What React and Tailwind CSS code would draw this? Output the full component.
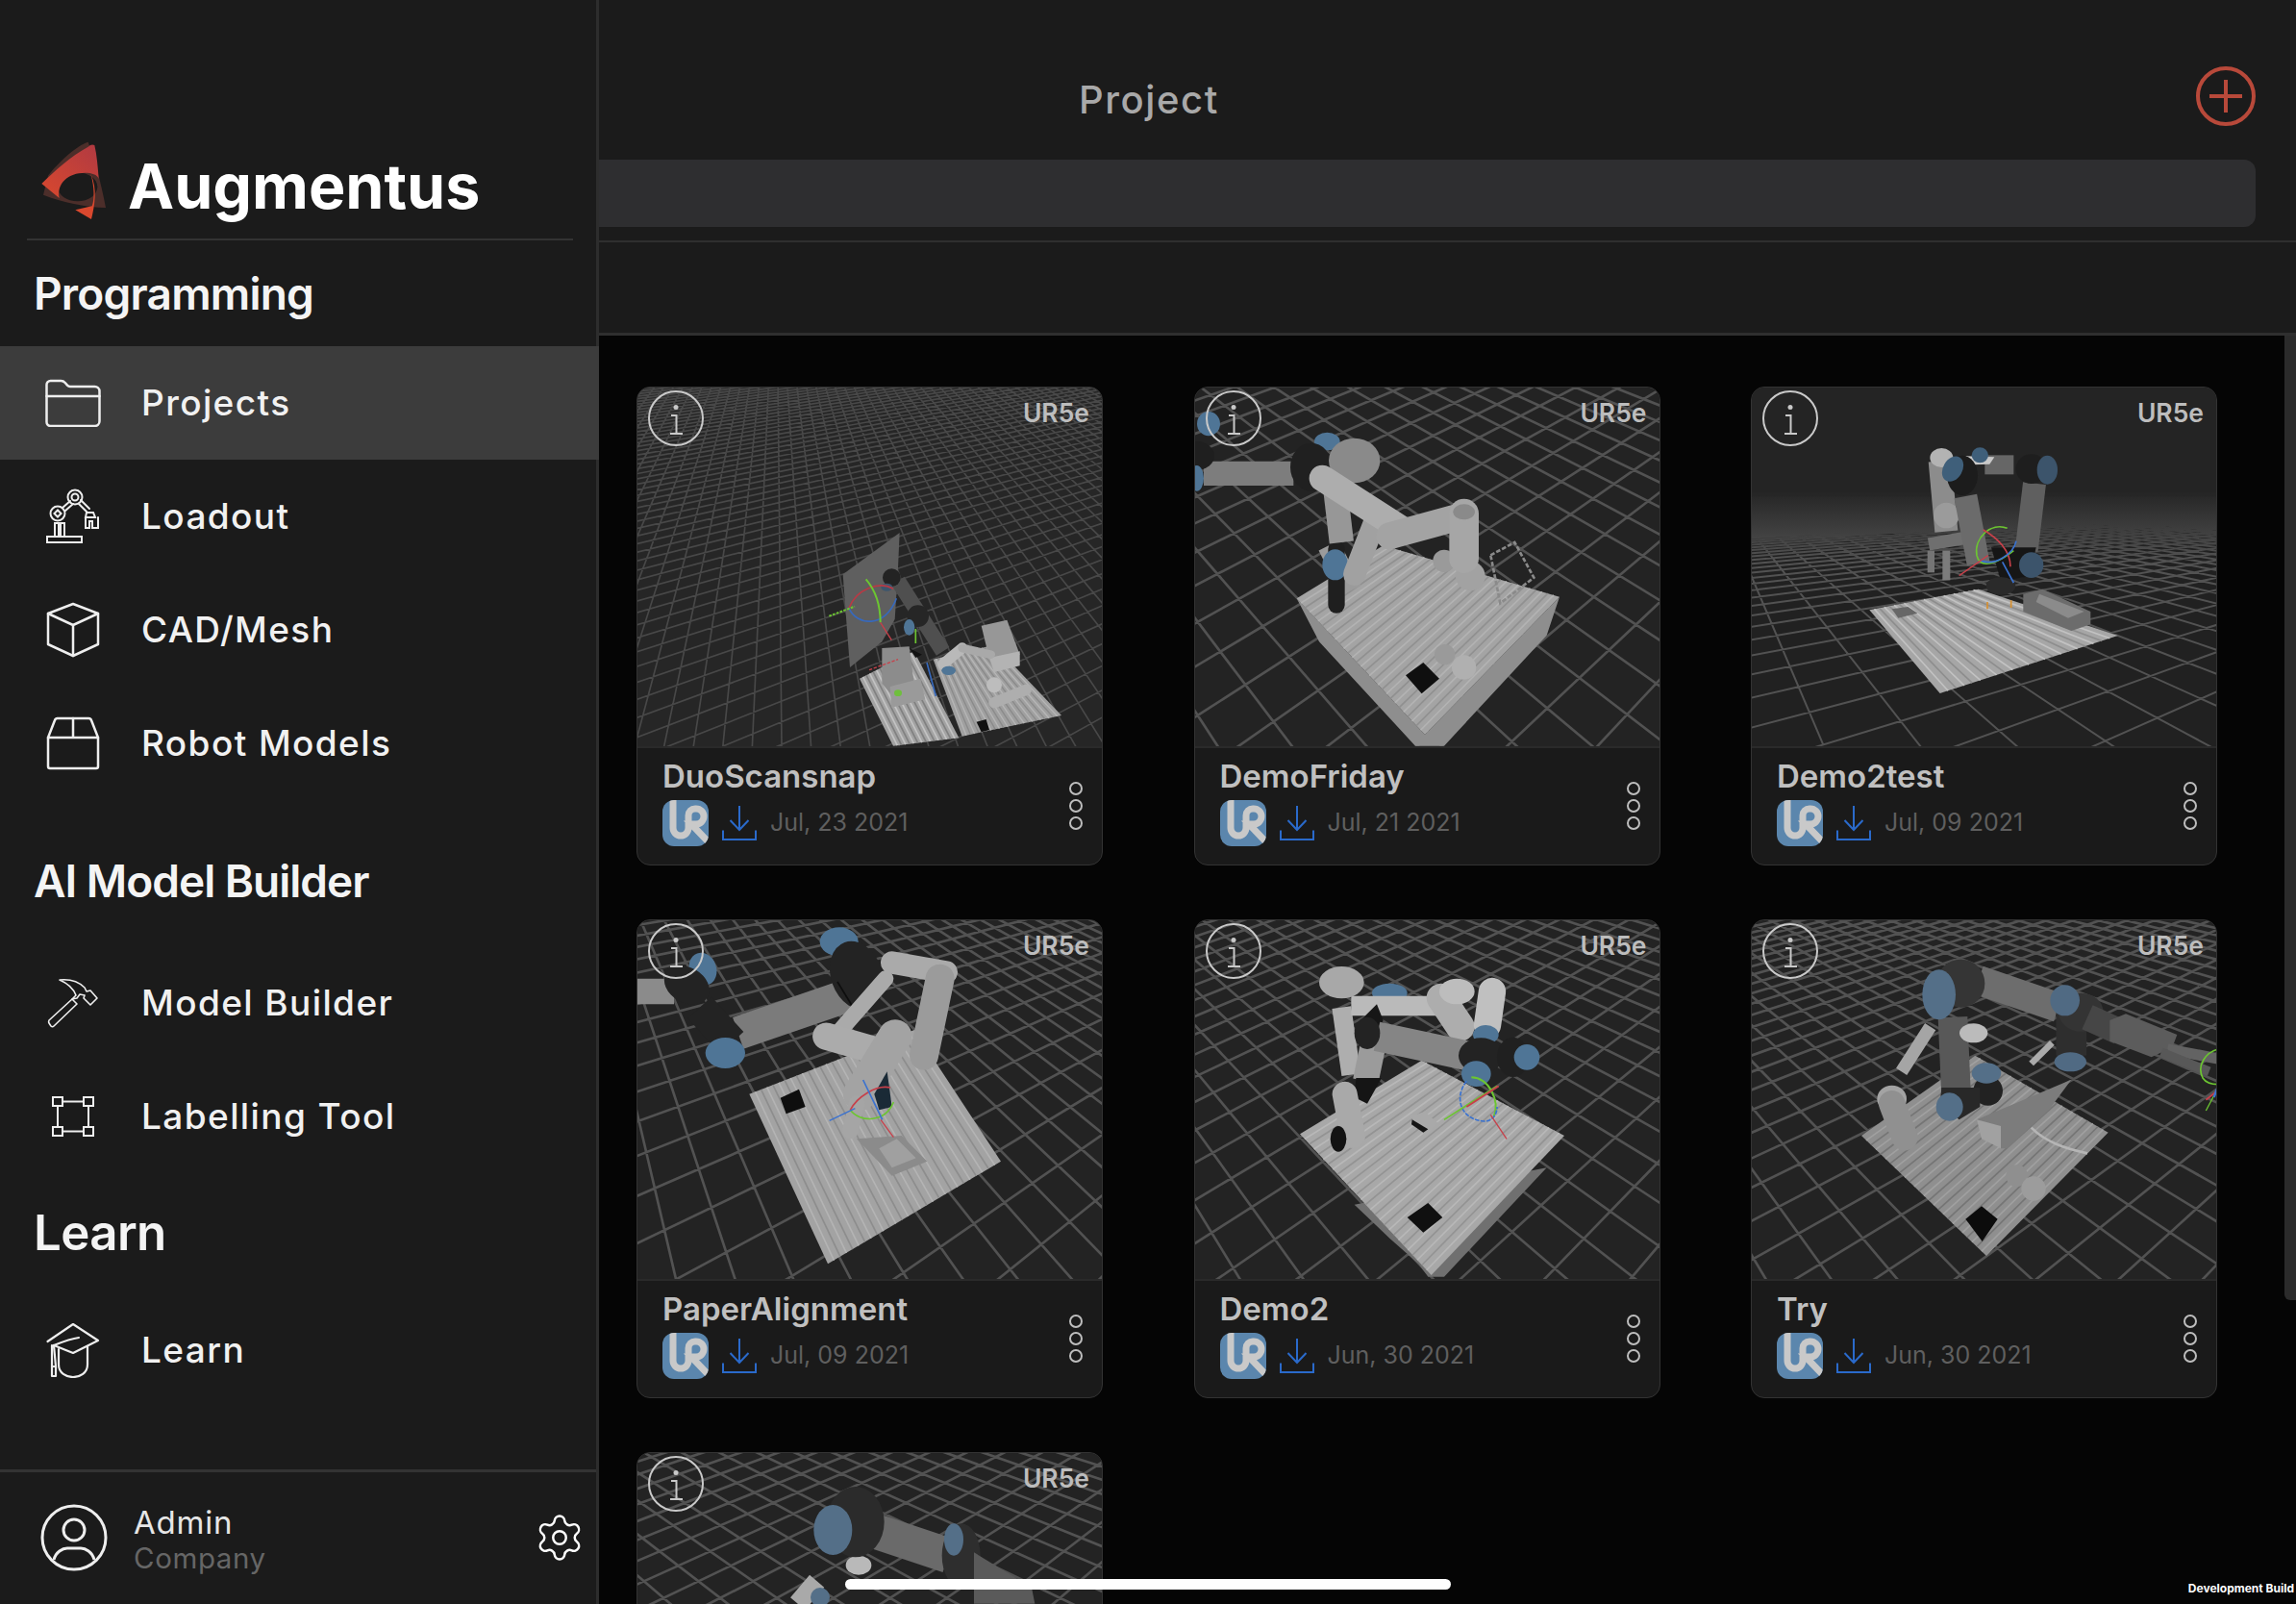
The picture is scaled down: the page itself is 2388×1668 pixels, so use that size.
import React from "react";
import { Settings } from "lucide-react";

const FONT = "font-['Inter','Noto_Sans',sans-serif]";

// perspective floor grid, built from two vanishing points
const Grid = ({ vp1, vp2, o, s1, s2, w = 8, c = "#525252" }) => {
  const d1 = Math.hypot(vp1[0] - o[0], vp1[1] - o[1]);
  const d2 = Math.hypot(vp2[0] - o[0], vp2[1] - o[1]);
  const a = s1 / (d1 - s1);
  const b = s2 / (d2 - s2);
  const pt = (u, v) => {
    const den = a * u + b * v + 1;
    const x = (a * u * vp1[0] + b * v * vp2[0] + o[0]) / den;
    const y = (a * u * vp1[1] + b * v * vp2[1] + o[1]) / den;
    return `${x.toFixed(1)} ${y.toFixed(1)}`;
  };
  let d = "";
  for (let i = -70; i <= 260; i++) {
    const u0 = (0.06 - 1 - b * i) / a;
    d += `M${pt(u0, i)}L${pt(400, i)}`;
    const v0 = (0.06 - 1 - a * i) / b;
    d += `M${pt(i, v0)}L${pt(i, 400)}`;
  }
  return <path d={d} fill="none" stroke={c} strokeWidth={w} />;
};

const Tube = ({ p, w, c, cap = "butt" }) => (
  <line x1={p[0]} y1={p[1]} x2={p[2]} y2={p[3]} stroke={c} strokeWidth={w} strokeLinecap={cap} />
);

const Cap = ({ x, y, rx, ry = rx, c, r = 0 }) => (
  <ellipse cx={x} cy={y} rx={rx} ry={ry} fill={c} transform={`rotate(${r} ${x} ${y})`} />
);

const Poly = ({ pts, c }) => <polygon points={pts} fill={c} />;

// scanned table: a quad with ripples running from edge a-d to edge b-c
const Table = ({ q, n, base, hi, lo, w = 7 }) => {
  const [a, b, c, d] = q;
  const lerp = (p, r, t) => [p[0] + (r[0] - p[0]) * t, p[1] + (r[1] - p[1]) * t];
  const lines = [];
  for (let i = 1; i < n; i++) {
    const t = i / n;
    const p = lerp(a, d, t);
    const r = lerp(b, c, t);
    lines.push(<line key={i} x1={p[0]} y1={p[1]} x2={r[0]} y2={r[1]} stroke={i % 2 ? hi : lo} strokeWidth={w} />);
  }
  return (
    <g>
      <polygon points={q.map((p) => p.join(",")).join(" ")} fill={base} />
      {lines}
    </g>
  );
};

const Scene = ({ ox, oy, children, bg = "#232323" }) => (
  <svg width="485" height="373" viewBox={`${ox} ${oy} 1455 1119`} className="block blur-[0.6px]">
    <rect x={ox} y={oy} width="1455" height="1119" fill={bg} />
    {children}
  </svg>
);

const BLUE = "#4f7596";
const DARK = "#232323";

const SceneOne = () => (
  <Scene ox={37} oy={37} bg="#262626">
    <Grid vp1={[4300, -500]} vp2={[470, -500]} o={[400, 1050]} s1={92} s2={62} w={5} c="#484848" />
    <Poly pts="855,490 850,600 840,760 800,830 700,910 690,780 678,620" c="#5f5f5f" />
    <Tube p={[850, 640, 990, 860]} w={48} c="#4f4f4f" />
    <Cap x={830} y={630} rx={28} c={DARK} />
    <Cap x={912} y={750} rx={34} c="#262626" />
    <Cap x={885} y={785} rx={17} ry={25} c={BLUE} />
    <Cap x={815} y={660} rx={18} ry={12} c="#3d566d" />
    <Table q={[[730, 945], [835, 1155], [1040, 1130], [900, 860]]} n={16} base="#a3a3a3" hi="#c3c3c3" lo="#808080" w={5} />
    <Table q={[[960, 885], [1050, 1125], [1360, 1060], [1150, 840]]} n={24} base="#a0a0a0" hi="#b6b6b6" lo="#8a8a8a" w={4} />
    <Poly pts="800,850 885,845 900,960 825,990 800,960" c="#8c8c8c" />
    <Poly pts="825,970 920,945 935,1010 830,1035" c="#9a9a9a" />
    <Poly pts="1110,780 1190,762 1230,870 1140,905" c="#979797" />
    <Poly pts="1135,880 1230,860 1230,905 1150,925" c="#b3b3b3" />
    <Tube p={[990, 900, 1050, 850]} w={34} c="#b9b9b9" cap="round" />
    <Tube p={[1050, 850, 1140, 870]} w={26} c="#a9a9a9" cap="round" />
    <Cap x={1150} y={965} rx={24} c="#bdbdbd" />
    <Tube p={[1150, 1020, 1250, 980]} w={34} c="#aeaeae" cap="round" />
    <Cap x={1008} y={920} rx={22} ry={14} c="#4f7596" />
    <Poly pts="1095,1080 1125,1072 1135,1105 1110,1112" c="#111" />
    <Poly pts="885,850 925,870 905,880" c="#111" />
    <Cap x={850} y={990} rx={12} ry={10} c="#6fbf3d" />
    <path d="M697 725 C720 665 790 640 835 665" fill="none" stroke="#b73a45" strokeWidth={5} />
    <path d="M697 725 C720 780 810 790 845 695" fill="none" stroke="#3769bc" strokeWidth={5} />
    <path d="M750 635 C780 670 795 720 795 770" fill="none" stroke="#6cc531" strokeWidth={6} />
    <path d="M635 750 L715 720" fill="none" stroke="#6cc531" strokeWidth={6} strokeDasharray="8 4" />
    <path d="M795 770 L830 825" fill="none" stroke="#c7404a" strokeWidth={4} />
    <path d="M760 918 L850 885" fill="none" stroke="#c7404a" strokeWidth={4} strokeDasharray="10 5" />
    <path d="M905 790 L905 835" fill="none" stroke="#6cc531" strokeWidth={5} />
    <path d="M940 895 L968 1000" fill="none" stroke="#3769bc" strokeWidth={5} />
  </Scene>
);

const SceneTwo = () => (
  <Scene ox={33} oy={37}>
    <Grid vp1={[3400, -1100]} vp2={[-1300, -1000]} o={[650, 1000]} s1={150} s2={150} />
    <Poly pts="350,695 420,830 720,1155 810,1155 1130,810 1170,690 750,1120" c="#8e8e8e" />
    <Table q={[[350, 695], [620, 530], [1170, 690], [750, 1120]]} n={30} base="#a4a4a4" hi="#b3b3b3" lo="#909090" w={5} />
    <Poly pts="690,935 745,895 795,945 740,992" c="#0f0f0f" />
    <Cap x={812} y={870} rx={32} c="#9a9a9a" />
    <Cap x={872} y={910} rx={38} c="#b0b0b0" />
    <path d="M955 560 L1030 520 L1090 630 L985 710 Z" fill="none" stroke="#8a8a8a" strokeWidth={8} strokeDasharray="14 6" />
    <Cap x={810} y={578} rx={35} c="#9a9a9a" />
    <Cap x={892} y={625} rx={46} c="#a2a2a2" />
    <Tube p={[450, 530, 520, 670]} w={70} c="#9b9b9b" />
    <Tube p={[474, 540, 474, 715]} w={52} c="#1f1f1f" cap="round" />
    <Cap x={470} y={590} rx={40} ry={48} c={BLUE} />
    <Tube p={[600, 440, 530, 620]} w={70} c="#a1a1a1" cap="round" />
    <Tube p={[470, 350, 490, 520]} w={76} c="#979797" />
    <Tube p={[60, 305, 340, 305]} w={76} c="#7d7d7d" />
    <Cap x={75} y={150} rx={36} ry={38} c={BLUE} />
    <Cap x={38} y={250} rx={55} ry={45} c="#1f1f1f" />
    <Cap x={38} y={320} rx={22} ry={40} c={BLUE} />
    <Cap x={445} y={205} rx={40} ry={28} c={BLUE} />
    <Cap x={395} y={285} rx={65} ry={75} c="#202020" />
    <Cap x={530} y={265} rx={80} ry={70} c="#8a8a8a" />
    <Tube p={[430, 320, 680, 480]} w={82} c="#adadad" cap="round" />
    <Tube p={[640, 500, 860, 440]} w={84} c="#a3a3a3" cap="round" />
    <Tube p={[872, 430, 872, 570]} w={92} c="#a6a6a6" cap="round" />
    <Cap x={872} y={425} rx={34} ry={24} c="#8a8a8a" />
  </Scene>
);

const SceneThree = () => (
  <Scene ox={33} oy={21} bg="#212121">
    <defs>
      <linearGradient id="horizonFade" x1="0" y1="0" x2="0" y2="1">
        <stop offset="0" stopColor="#262626" />
        <stop offset="1" stopColor="#262626" stopOpacity="0" />
      </linearGradient>
    </defs>
    <Grid vp1={[3000, 300]} vp2={[-100, 300]} o={[700, 1000]} s1={180} s2={110} w={6} />
    <rect x="33" y="21" width="1455" height="340" fill="#242424" />
    <rect x="33" y="350" width="1455" height="210" fill="url(#horizonFade)" />
    <Table q={[[400, 715], [620, 975], [1175, 795], [740, 650]]} n={22} base="#a6a6a6" hi="#c2c2c2" lo="#8d8d8d" w={5} />
    <Poly pts="470,712 520,705 550,725 490,740" c="#676767" />
    <Poly pts="880,665 940,650 1090,720 1090,760 1030,780 880,720" c="#6c6c6c" />
    <Poly pts="930,665 1070,720 1020,740 920,690" c="#8b8b8b" />
    <Tube p={[620, 250, 640, 470]} w={72} c="#8c8c8c" />
    <Cap x={625} y={240} rx={36} ry={30} c="#b3b3b3" />
    <Cap x={640} y={420} rx={40} ry={40} c="#9b9b9b" />
    <Tube p={[585, 510, 700, 490]} w={40} c="#6f6f6f" />
    <Tube p={[592, 530, 592, 598]} w={22} c="#757575" />
    <Tube p={[640, 530, 640, 622]} w={24} c="#7c7c7c" />
    <Tube p={[700, 360, 740, 570]} w={72} c="#6b6b6b" />
    <Tube p={[760, 262, 850, 262]} w={60} c="#666" />
    <Poly pts="700,235 790,238 775,260 720,262" c="#c9c9c9" />
    <Cap x={690} y={295} rx={48} ry={62} c="#1c1c1c" />
    <Cap x={660} y={275} rx={30} ry={42} c="#3f5f7a" r={30} />
    <Cap x={745} y={232} rx={26} ry={24} c="#3f5f7a" />
    <Tube p={[915, 320, 890, 530]} w={72} c="#5f5f5f" />
    <Cap x={905} y={275} rx={48} ry={46} c="#1e1e1e" />
    <Cap x={955} y={278} rx={32} ry={45} c="#3c546b" />
    <Poly pts="780,520 920,520 900,610 810,625" c="#161616" />
    <Cap x={905} y={575} rx={38} ry={40} c="#3c546b" />
    <Cap x={810} y={640} rx={46} ry={28} c="#2a2a2a" />
    <path d="M830 460 C780 440 725 490 735 545 C745 590 800 570 850 530" fill="none" stroke="#6cc531" strokeWidth={5} />
    <path d="M755 465 C800 490 840 530 840 580" fill="none" stroke="#c7404a" strokeWidth={5} />
    <path d="M745 560 C790 580 850 540 858 500" fill="none" stroke="#3a72d0" strokeWidth={5} />
    <path d="M680 608 L770 545" fill="none" stroke="#c7404a" strokeWidth={4} />
    <path d="M815 565 L850 630" fill="none" stroke="#3a72d0" strokeWidth={5} />
    <path d="M768 690 L768 712 M842 685 L842 708" fill="none" stroke="#d8902f" strokeWidth={5} />
  </Scene>
);

const SceneFour = () => (
  <Scene ox={36} oy={18}>
    <Grid vp1={[3200, -500]} vp2={[-290, -770]} o={[400, 850]} s1={135} s2={120} />
    <Table q={[[385, 560], [630, 1090], [1170, 770], [900, 360]]} n={28} base="#a3a3a3" hi="#b4b4b4" lo="#8d8d8d" w={5} />
    <Poly pts="482,572 540,545 560,600 500,622" c="#0e0e0e" />
    <Poly pts="720,700 860,690 940,770 830,815" c="#8b8b8b" />
    <Poly pts="845,700 905,760 830,790 790,730" c="#a0a0a0" />
    <Tube p={[36, 240, 150, 240]} w={80} c="#8b8b8b" />
    <Tube p={[350, 370, 700, 250]} w={104} c="#7b7b7b" />
    <Cap x={240} y={170} rx={42} ry={52} c={BLUE} r={-20} />
    <Cap x={190} y={220} rx={75} ry={55} c={DARK} r={30} />
    <Tube p={[230, 290, 330, 400]} w={100} c="#232323" />
    <Cap x={310} y={432} rx={62} ry={48} c={BLUE} />
    <Cap x={665} y={85} rx={60} ry={45} c={BLUE} />
    <Cap x={720} y={190} rx={80} ry={110} c={DARK} r={-20} />
    <Tube p={[660, 210, 715, 300]} w={5} c="#0e0e0e" />
    <Tube p={[830, 150, 1000, 180]} w={70} c="#aaa" cap="round" />
    <Tube p={[980, 200, 930, 440]} w={90} c="#9b9b9b" cap="round" />
    <Tube p={[810, 200, 670, 360]} w={50} c="#aaa" cap="round" />
    <Tube p={[625, 380, 800, 430]} w={85} c="#ababab" cap="round" />
    <Tube p={[840, 380, 730, 560]} w={105} c="#a3a3a3" cap="round" />
    <Tube p={[720, 590, 700, 675]} w={50} c="#a5a5a5" cap="round" />
    <Poly pts="775,560 815,490 830,600 790,610" c="#1a2a36" />
    <path d="M700 610 C720 570 780 530 825 540" fill="none" stroke="#c7404a" strokeWidth={5} />
    <path d="M700 610 C730 650 810 650 835 585" fill="none" stroke="#6cc531" strokeWidth={5} />
    <path d="M740 516 L800 640" fill="none" stroke="#3a72d0" strokeWidth={5} />
    <path d="M635 643 L715 605" fill="none" stroke="#3a72d0" strokeWidth={4} />
    <path d="M795 640 L835 695" fill="none" stroke="#c7404a" strokeWidth={4} />
  </Scene>
);

const SceneFive = () => (
  <Scene ox={33} oy={18}>
    <Grid vp1={[3200, -1000]} vp2={[-950, -700]} o={[600, 950]} s1={130} s2={130} />
    <Poly pts="530,905 640,1010 730,1090 760,1130 810,1130 1130,790" c="#707070" />
    <Table q={[[360, 685], [740, 455], [1185, 690], [770, 1125]]} n={28} base="#a8a8a8" hi="#b8b8b8" lo="#939393" w={5} />
    <Poly pts="695,945 760,900 805,945 745,992" c="#101010" />
    <Poly pts="705,630 750,615 790,650 750,690" c="#a9a9a9" />
    <Poly pts="710,640 760,670 745,680 708,655" c="#151515" />
    <Cap x={640} y={245} rx={55} ry={30} c={BLUE} />
    <Tube p={[490, 290, 520, 500]} w={60} c="#aeaeae" />
    <Tube p={[590, 400, 565, 520]} w={80} c="#9b9b9b" />
    <Poly pts="535,510 615,510 570,590 530,570" c="#151515" />
    <Tube p={[500, 560, 525, 690]} w={78} c="#a9a9a9" cap="round" />
    <Cap x={480} y={700} rx={25} ry={40} c="#131313" />
    <Tube p={[520, 285, 810, 285]} w={62} c="#bababa" />
    <Cap x={490} y={212} rx={70} ry={50} c="#a8a8a8" />
    <Tube p={[800, 260, 860, 350]} w={90} c="#adadad" cap="round" />
    <Tube p={[960, 240, 945, 345]} w={85} c="#c0c0c0" cap="round" />
    <Cap x={850} y={240} rx={55} ry={40} c="#bdbdbd" />
    <Poly pts="600,280 540,340 590,380 620,330" c="#161616" />
    <Tube p={[600, 380, 880, 440]} w={92} c="#858585" />
    <Cap x={570} y={370} rx={40} ry={50} c={DARK} />
    <Cap x={940} y={375} rx={40} ry={30} c={BLUE} />
    <Cap x={925} y={440} rx={70} ry={55} c="#232323" />
    <Cap x={1025} y={445} rx={50} ry={62} c="#202020" />
    <Cap x={1068} y={445} rx={40} c={BLUE} />
    <Cap x={910} y={497} rx={46} ry={40} c={BLUE} />
    <path d="M895 508 C950 510 985 580 965 630" fill="none" stroke="#6cc531" strokeWidth={6} />
    <path d="M880 520 C840 570 860 640 935 645 C960 645 975 625 975 600" fill="none" stroke="#3a72d0" strokeWidth={5} strokeDasharray="14 4" />
    <path d="M810 640 L975 535" fill="none" stroke="#6cc531" strokeWidth={5} />
    <path d="M880 600 L980 535" fill="none" stroke="#c7404a" strokeWidth={6} />
    <path d="M955 625 L1005 700" fill="none" stroke="#c7404a" strokeWidth={4} />
  </Scene>
);

const SceneSix = () => (
  <Scene ox={33} oy={18}>
    <Grid vp1={[3200, -700]} vp2={[-900, -500]} o={[700, 950]} s1={125} s2={120} />
    <Table q={[[375, 690], [730, 440], [1145, 680], [765, 1065]]} n={26} base="#8f8f8f" hi="#a0a0a0" lo="#757575" w={5} />
    <Poly pts="700,950 750,910 800,950 752,1020" c="#0c0c0c" />
    <Cap x={860} y={815} rx={34} c="#8f8f8f" />
    <Cap x={912} y={855} rx={38} c="#9c9c9c" />
    <path d="M905 665 C950 710 1010 730 1080 745" fill="none" stroke="#b5b5b5" strokeWidth={8} />
    <Poly pts="735,640 1030,515 960,610 830,730 810,730" c="#7c7c7c" />
    <Poly pts="735,640 810,660 810,730 750,700" c="#a1a1a1" />
    <Tube p={[590, 350, 500, 490]} w={40} c="#a5a5a5" />
    <Cap x={470} y={575} rx={46} ry={42} c="#a3a3a3" />
    <Tube p={[470, 590, 510, 695]} w={82} c="#909090" cap="round" />
    <Tube p={[660, 320, 670, 550]} w={92} c="#585858" />
    <Cap x={770} y={550} rx={46} c="#222" />
    <Poly pts="625,540 745,540 745,600 680,640 620,590" c="#282828" />
    <Cap x={650} y={600} rx={42} ry={44} c="#546f88" />
    <Cap x={765} y={495} rx={46} ry={32} c="#546f88" />
    <Cap x={725} y={370} rx={44} ry={30} c="#bbb" />
    <Tube p={[740, 205, 990, 290]} w={92} c="#6d6d6d" />
    <Cap x={685} y={215} rx={75} ry={75} c="#353535" />
    <Cap x={617} y={250} rx={52} ry={78} c="#546f88" />
    <Tube p={[970, 400, 905, 465]} w={20} c="#aaa" />
    <Tube p={[1030, 300, 1030, 440]} w={95} c="#2e2e2e" />
    <Cap x={1060} y={305} rx={70} ry={60} c="#343434" />
    <Cap x={1010} y={268} rx={46} ry={48} c="#506a83" />
    <Cap x={1027} y={460} rx={50} ry={30} c="#506a83" />
    <Tube p={[1080, 320, 1180, 365]} w={82} c="#464646" />
    <Poly pts="1150,330 1200,310 1360,375 1345,415 1280,445 1150,395" c="#5c5c5c" />
    <Tube p={[1330, 420, 1488, 450]} w={34} c="#636363" />
    <Tube p={[1310, 430, 1460, 490]} w={30} c="#585858" />
    <path d="M1488 420 C1450 430 1420 470 1440 510 C1450 525 1470 530 1488 530" fill="none" stroke="#6cc531" strokeWidth={5} />
    <path d="M1488 540 L1450 612" fill="none" stroke="#6cc531" strokeWidth={4} />
    <path d="M1488 548 L1450 578" fill="none" stroke="#c7404a" strokeWidth={6} />
    <path d="M1488 535 L1475 570" fill="none" stroke="#3a72d0" strokeWidth={7} />
  </Scene>
);

const SceneSeven = () => (
  <Scene ox={0} oy={0}>
    <Grid vp1={[2900, -900]} vp2={[-1500, -900]} o={[700, 400]} s1={95} s2={95} />
    <Tube p={[700, 230, 970, 320]} w={110} c="#6a6a6a" />
    <Tube p={[560, 400, 500, 470]} w={60} c="#a9a9a9" />
    <Cap x={690} y={350} rx={40} ry={30} c="#b9b9b9" />
    <Cap x={680} y={215} rx={90} ry={110} c="#2b2b2b" />
    <Cap x={610} y={240} rx={60} ry={78} c="#546f88" />
    <Cap x={1010} y={320} rx={60} ry={100} c="#2e2e2e" />
    <Cap x={987} y={270} rx={30} ry={50} c="#546f88" />
    <Poly pts="1050,310 1230,420 1240,470 1050,470" c="#5a5a5a" />
    <Cap x={570} y={450} rx={30} c="#546f88" />
  </Scene>
);

const projects = [
  { id: 1, name: "DuoScansnap", date: "Jul, 23 2021", Art: SceneOne },
  { id: 2, name: "DemoFriday", date: "Jul, 21 2021", Art: SceneTwo },
  { id: 3, name: "Demo2test", date: "Jul, 09 2021", Art: SceneThree },
  { id: 4, name: "PaperAlignment", date: "Jul, 09 2021", Art: SceneFour },
  { id: 5, name: "Demo2", date: "Jun, 30 2021", Art: SceneFive },
  { id: 6, name: "Try", date: "Jun, 30 2021", Art: SceneSix },
  { id: 7, Art: SceneSeven },
];

const iconProps = { fill: "none", stroke: "currentColor", strokeLinejoin: "round", strokeLinecap: "round" };

const FolderIcon = () => (
  <svg width="58" height="50" viewBox="0 0 58 50" {...iconProps} strokeWidth="2.5">
    <path d="M1.5 6a4 4 0 0 1 4-4h11c2 0 3 .7 4.2 2l2.3 2.6c.8.9 1.6 1.4 3 1.4h25.5a5 5 0 0 1 5 5v31a5 5 0 0 1-5 5h-46a4 4 0 0 1-4-4z" />
    <path d="M1.5 18h55" />
  </svg>
);

const RobotIcon = () => (
  <svg width="56" height="58" viewBox="0 0 56 58" {...iconProps} strokeWidth="2" strokeLinejoin="miter">
    <rect x="1" y="50" width="36" height="6" />
    <rect x="9" y="36" width="4" height="14" />
    <rect x="15" y="36" width="4" height="14" />
    <circle cx="12" cy="26" r="7.5" />
    <rect x="9.5" y="23.5" width="5" height="5" transform="rotate(45 12 26)" />
    <circle cx="30" cy="9" r="7.5" />
    <circle cx="30" cy="9" r="3.5" />
    <path d="M17 20l8-7M20 23l8-7M36 12l9 9M34 16l8 8" />
    <path d="M42 25h7l2 5h-10z" />
    <path d="M41 30v11h4v-7h3v7h6V30" />
  </svg>
);

const CubeIcon = () => (
  <svg width="56" height="58" viewBox="0 0 56 58" {...iconProps} strokeWidth="2.5">
    <path d="M28 2l26 10v32L28 56 2 44V12z" />
    <path d="M2 12l26 12 26-12M28 24v32" />
  </svg>
);

const PackageIcon = () => (
  <svg width="56" height="56" viewBox="0 0 56 56" {...iconProps} strokeWidth="2.5">
    <path d="M2 22L9 4a3 3 0 0 1 3-2h32a3 3 0 0 1 3 2l7 18v30a2 2 0 0 1-2 2H4a2 2 0 0 1-2-2z" />
    <path d="M2 22h52M28 2v20" />
  </svg>
);

const HammerIcon = () => (
  <svg width="54" height="52" viewBox="0 0 54 52" {...iconProps} strokeWidth="1.6">
    <path d="M2 44l24-22 5 5-24 23c-1 1-2 1-3 0l-2-3c-.5-1-.5-2 0-3z" />
    <path d="M26 22l4-4C27 10 20 5 13 2c10-1 20 2 26 8l2 4 4-1 7 8-7 7-7-7 1-3-5-1-3 4z" />
  </svg>
);

const LabelIcon = () => (
  <svg width="44" height="42" viewBox="0 0 44 42" {...iconProps} strokeWidth="2" strokeLinejoin="miter">
    <rect x="1" y="1" width="10" height="9" />
    <rect x="33" y="1" width="10" height="9" />
    <rect x="1" y="32" width="10" height="9" />
    <rect x="33" y="32" width="10" height="9" />
    <path d="M11 5.5h22M11 36.5h22M6 10v22M38 10v22" />
  </svg>
);

const CapIcon = () => (
  <svg width="56" height="58" viewBox="0 0 56 58" {...iconProps} strokeWidth="2.2">
    <path d="M1.5 20L28 2l26 17-26 13-20-8" />
    <path d="M8 24c10-4 18-7 26-8" />
    <path d="M13 28v16c0 9 8 13 15 13s15-4 15-13V25" />
    <path d="M6 24v22h4L8 24" />
    <path d="M6 46v10h4V46" />
  </svg>
);

const NavRow = ({ icon, label, active }) => (
  <div className={`flex h-[118px] items-center ${active ? "mr-[-3px] bg-[#3c3c3c]" : ""}`}>
    <span className="mr-[42px] ml-[47px] flex w-[58px] shrink-0 justify-center text-[#eeeeee]">{icon}</span>
    <span className="text-[37px] font-medium tracking-[1.4px] text-[#f1f1f1]">{label}</span>
  </div>
);

const Logo = () => (
  <svg width="76" height="84" viewBox="30 20 228 252" className="mb-[6px] shrink-0">
    <defs>
      <linearGradient id="logoFlame" x1="0" y1="1" x2="1" y2="0">
        <stop offset="0" stopColor="#d9482e" />
        <stop offset="1" stopColor="#b03a42" />
      </linearGradient>
    </defs>
    <path d="M185 25C150 35 90 90 60 130L45 190C110 215 180 228 240 230 225 150 205 80 185 25Z" fill="#4c2e2a" />
    <ellipse cx="152" cy="165" rx="62" ry="45" fill="#1b1b1b" />
    <path d="M205 35Q195 30 185 40C130 70 80 115 40 155L95 200C85 150 130 115 190 122 205 125 215 130 218 140 215 100 212 65 205 35Z" fill="url(#logoFlame)" />
    <path d="M193 125C205 165 205 205 197 225L145 237 195 266C205 225 215 170 193 125Z" fill="#d9482e" />
  </svg>
);

const URLogo = () => (
  <div className="h-[48px] w-[48px] shrink-0 overflow-hidden rounded-[12px] bg-[#5b86ad]">
    <svg width="48" height="48" viewBox="0 0 48 48" fill="none" stroke="#c9c9c9" strokeWidth="7">
      <path d="M11 -2V29a8 8 0 0 0 16 0V16a7 7 0 0 1 7-7h1a8 8 0 0 1 0 16h-5L50 46" />
    </svg>
  </div>
);

const DownloadIcon = () => (
  <svg width="36" height="36" viewBox="0 0 36 36" fill="none" stroke="#2a6acb" strokeWidth="2" className="shrink-0">
    <path d="M18 0v25M8.5 15L18 25l9.5-10M1 25.5V35h34v-9.5" />
  </svg>
);

const InfoIcon = () => (
  <svg width="58" height="58" viewBox="0 0 58 58" fill="none" stroke="#c9c9c9" strokeWidth="2">
    <circle cx="29" cy="29" r="28" />
    <circle cx="29" cy="17.5" r="2.5" fill="#c9c9c9" stroke="none" />
    <path d="M24 26h5.5v19M23 45h13" />
  </svg>
);

const Card = ({ project }) => {
  const { name, date, Art } = project;
  return (
    <div className="h-[498px] w-[485px] overflow-hidden rounded-[14px] border border-[#333333] bg-[#1a1a1a]">
      <div className="relative h-[372px]">
        <Art />
        <span className="absolute top-[3px] left-[11px]">
          <InfoIcon />
        </span>
        <span className="absolute top-[7px] right-[13px] text-[26.5px] font-semibold text-[#bdbdbd]">UR5e</span>
      </div>
      {name && (
        <div className="flex h-[124px] items-center justify-between border-t-[3px] border-[#2a2a2a] pr-[20px] pl-[26px]">
          <div className="flex flex-col pb-[10px]">
            <span className="mb-[6px] text-[33px] leading-[38px] font-semibold text-[#c0c0c0]">{name}</span>
            <div className="flex items-center gap-[14px]">
              <URLogo />
              <DownloadIcon />
              <span className="text-[25px] text-[#5f5f5f]">{date}</span>
            </div>
          </div>
          <div className="flex flex-col gap-[4px] pb-[2px]">
            <span className="h-[14px] w-[14px] rounded-full border-2 border-[#bdbdbd]" />
            <span className="h-[14px] w-[14px] rounded-full border-2 border-[#bdbdbd]" />
            <span className="h-[14px] w-[14px] rounded-full border-2 border-[#bdbdbd]" />
          </div>
        </div>
      )}
    </div>
  );
};

export default function App() {
  return (
    <div className={`flex h-[1668px] w-[2388px] overflow-hidden bg-[#050505] ${FONT}`}>
      <aside className="flex w-[623px] shrink-0 flex-col border-r-[3px] border-[#2d2d2d] bg-[#1b1b1b]">
        <div className="mr-[24px] ml-[28px] flex h-[250px] items-end gap-[17px] border-b-2 border-[#333333] pb-[12px] pl-[12px]">
          <Logo />
          <span className="text-[64.5px] leading-[84px] font-bold text-white">Augmentus</span>
        </div>
        <h2 className="flex h-[110px] items-center pl-[35px] text-[46px] font-semibold tracking-[-0.8px] text-[#f4f4f4]">
          Programming
        </h2>
        <NavRow active icon={<FolderIcon />} label="Projects" />
        <NavRow icon={<RobotIcon />} label="Loadout" />
        <NavRow icon={<CubeIcon />} label="CAD/Mesh" />
        <NavRow icon={<PackageIcon />} label="Robot Models" />
        <h2 className="flex h-[152px] items-center pt-[16px] pl-[35px] text-[46px] font-semibold tracking-[-1px] text-[#f4f4f4]">
          AI Model Builder
        </h2>
        <NavRow icon={<HammerIcon />} label="Model Builder" />
        <NavRow icon={<LabelIcon />} label="Labelling Tool" />
        <h2 className="flex h-[125px] items-center pl-[35px] text-[51px] font-semibold tracking-[-0.6px] text-[#f4f4f4]">
          Learn
        </h2>
        <NavRow icon={<CapIcon />} label="Learn" />
        <div className="flex-1" />
        <div className="flex h-[140px] items-center border-t-[3px] border-[#333333] pr-[11px] pb-[2px] pl-[42px]">
          <svg width="70" height="70" viewBox="0 0 70 70" fill="none" stroke="#eeeeee" strokeWidth="3" className="shrink-0">
            <circle cx="35" cy="35" r="33" />
            <circle cx="35" cy="27" r="11" />
            <path d="M14 58c2-8 9-12 14-12 4 0 10 0 14 0 5 0 12 4 14 12" />
          </svg>
          <div className="ml-[27px] flex flex-col pt-[5px]">
            <span className="text-[33px] leading-[38px] tracking-[0.8px] text-[#e6e6e6]">Admin</span>
            <span className="text-[29.5px] leading-[36px] tracking-[0.6px] text-[#666666]">Company</span>
          </div>
          <Settings size={54} strokeWidth={1.1} className="ml-auto text-white" />
        </div>
      </aside>

      <main className="relative flex min-w-0 flex-1 flex-col">
        <header className="h-[349px] shrink-0 border-b-[3px] border-[#2f2f2f] bg-[#1b1b1b]">
          <div className="flex h-[166px] items-center pr-[42px] pl-[499px]">
            <span className="pt-[42px] text-[40px] font-medium tracking-[1.6px] text-[#a9a9a9]">Project</span>
            <svg width="62" height="62" viewBox="0 0 62 62" fill="none" stroke="#b8493a" strokeWidth="4" className="mt-[34px] ml-auto">
              <circle cx="31" cy="31" r="29" />
              <path d="M31 14v34M14 31h34" />
            </svg>
          </div>
          <div className="mr-[42px] h-[70px] rounded-r-[12px] bg-[#2e2e30]" />
          <div className="mt-[14px] h-[2px] bg-[#2f2f2f]" />
        </header>
        <div className="grid grid-cols-[repeat(3,485px)] gap-x-[94.5px] gap-y-[56px] pt-[53px] pl-[39px]">
          {projects.map((project) => (
            <Card key={project.id} project={project} />
          ))}
        </div>
        <div className="absolute top-[349px] right-0 h-[1003px] w-[12px] rounded-bl-[6px] bg-[#2b2b2b]" />
        <div className="absolute top-[1642px] left-[256px] h-[11px] w-[630px] rounded-full bg-white" />
        <span className="absolute right-[2px] bottom-[7px] text-[12px] font-bold text-white">Development Build</span>
      </main>
    </div>
  );
}
